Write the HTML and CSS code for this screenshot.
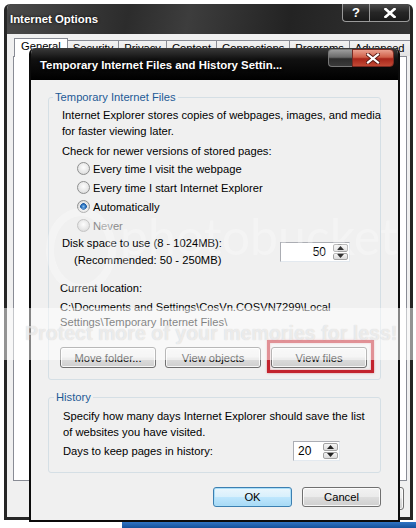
FILE: index.html
```html
<!DOCTYPE html>
<html lang="en">
<head>
    <meta charset="UTF-8">
    <meta name="viewport" content="width=device-width, initial-scale=1.0">
    <title>Temporary Internet Files and History Settings</title>
    <link rel="stylesheet" href="styles.css">
</head>
<body>
    <div class="desktop">
        <div class="taskbar"></div>

        <!-- Internet Options window behind the dialog -->
        <div class="window outer">
            <div class="titlebar">
                <span class="title">Internet Options</span>
                <div class="caption">
                    <span class="cap-btn help">?</span>
                    <span class="cap-btn close">
                        <svg width="12" height="10" viewBox="0 0 12 10"><path d="M1.5 1 L10.5 9 M10.5 1 L1.5 9" stroke="#fff" stroke-width="2.6" stroke-linecap="square"/></svg>
                    </span>
                </div>
            </div>
            <div class="outer-body">
                <ul class="tabs">
                    <li class="active">General</li>
                    <li>Security</li>
                    <li>Privacy</li>
                    <li>Content</li>
                    <li>Connections</li>
                    <li>Programs</li>
                    <li>Advanced</li>
                </ul>
                <div class="tab-panel"></div>
                <div class="outer-buttons">
                    <button class="btn">OK</button>
                    <button class="btn">Cancel</button>
                    <button class="btn">Apply</button>
                </div>
            </div>
        </div>

        <!-- Temporary Internet Files dialog -->
        <div class="window dialog">
            <div class="titlebar dark">
                <span class="title">Temporary Internet Files and History Settin...</span>
                <div class="caption">
                    <span class="cap-btn blank"></span>
                    <span class="cap-btn red">
                        <svg width="14" height="11" viewBox="0 0 14 11"><path d="M2 1.5 L12 9.5 M12 1.5 L2 9.5" stroke="#5a1a14" stroke-width="4" stroke-linecap="square"/><path d="M2 1.5 L12 9.5 M12 1.5 L2 9.5" stroke="#fff" stroke-width="2.2" stroke-linecap="square"/></svg>
                    </span>
                </div>
            </div>
            <div class="dialog-body">
                <fieldset class="group">
                    <legend>Temporary Internet Files</legend>
                    <p class="text">Internet Explorer stores copies of webpages, images, and media<br>for faster viewing later.</p>
                    <p class="text check">Check for newer versions of stored pages:</p>
                    <ul class="options">
                        <li><span class="radio"></span>Every time I visit the webpage</li>
                        <li><span class="radio"></span>Every time I start Internet Explorer</li>
                        <li><span class="radio checked"></span>Automatically</li>
                        <li class="faded"><span class="radio"></span>Never</li>
                    </ul>
                    <div class="disk">
                        <div class="disk-label">
                            <div>Disk space to use (8 - 1024MB):</div>
                            <div class="indent">(Recommended: 50 - 250MB)</div>
                        </div>
                        <div class="spin disk-spin">
                            <span class="spin-value">50</span>
                            <span class="spin-arrows">
                                <span class="arrow"><svg width="7" height="4" viewBox="0 0 7 4"><path d="M0 4 L3.5 0 L7 4 Z" fill="#333"/></svg></span>
                                <span class="arrow"><svg width="7" height="4" viewBox="0 0 7 4"><path d="M0 0 L3.5 4 L7 0 Z" fill="#333"/></svg></span>
                            </span>
                        </div>
                    </div>
                    <div class="location">
                        <p class="text">Current location:</p>
                        <p class="path">C:\Documents and Settings\CosVn.COSVN7299\Local<br>Settings\Temporary Internet Files\</p>
                        <div class="actions">
                            <button class="btn wide">Move folder...</button>
                            <button class="btn wide">View objects</button>
                            <span class="highlight"><button class="btn wide">View files</button></span>
                        </div>
                    </div>
                </fieldset>

                <fieldset class="group history">
                    <legend>History</legend>
                    <p class="text">Specify how many days Internet Explorer should save the list<br>of websites you have visited.</p>
                    <div class="days">
                        <span>Days to keep pages in history:</span>
                        <div class="spin days-spin">
                            <span class="spin-value">20</span>
                            <span class="spin-arrows">
                                <span class="arrow"><svg width="7" height="4" viewBox="0 0 7 4"><path d="M0 4 L3.5 0 L7 4 Z" fill="#222"/></svg></span>
                                <span class="arrow"><svg width="7" height="4" viewBox="0 0 7 4"><path d="M0 0 L3.5 4 L7 0 Z" fill="#222"/></svg></span>
                            </span>
                        </div>
                    </div>
                </fieldset>

                <div class="footer">
                    <button class="btn default">OK</button>
                    <button class="btn">Cancel</button>
                </div>
            </div>
        </div>

        <!-- photo host watermark -->
        <div class="wm-ring"></div>
        <div class="wm-logo">photobucket</div>
        <div class="wm-band">Protect more of your memories for less!</div>
    </div>
</body>
</html>
```

FILE: styles.css
```css
body {
    margin: 0;
    background: #fff;
    font-family: "Liberation Sans", Arial, sans-serif;
    font-size: 11.2px;
    color: #000;
}

.desktop {
    position: relative;
    width: 416px;
    height: 528px;
    overflow: hidden;
}

.taskbar {
    position: absolute;
    left: 122px;
    right: 0;
    top: 522px;
    bottom: 0;
    background: linear-gradient(#2f74c4, #15519a);
}

/* windows */
.window {
    position: absolute;
    box-sizing: border-box;
    background: #f0f0f0;
    border-radius: 6px 6px 0 0;
    overflow: hidden;
}

.outer {
    left: 4px;
    top: 4px;
    width: 409px;
    height: 516px;
    border: 3px solid #262626;
    border-top: none;
}

.dialog {
    left: 29px;
    top: 48px;
    width: 371px;
    height: 474px;
    border: 2px solid #0b0b0b;
    border-top: none;
}

.titlebar {
    display: flex;
    justify-content: space-between;
    height: 30px;
    background: linear-gradient(100deg, #4a4a4a 0%, #2c2c2c 30%, #3d3d3d 45%, #232323 70%, #333 100%);
}

.titlebar .title {
    margin: 8px 0 0 3px;
    line-height: 14px;
    font-weight: bold;
    font-size: 11.4px;
    color: #fff;
    text-shadow: 0 0 3px #000;
}

.titlebar.dark {
    height: 32px;
    background: linear-gradient(#3a3a3a 0%, #111 35%, #000 100%);
}

.titlebar.dark .title {
    margin: 10px 0 0 9px;
}

.caption {
    display: flex;
}

.cap-btn {
    display: flex;
    align-items: center;
    justify-content: center;
    box-sizing: border-box;
    height: 18px;
    border: 1px solid #9a9a9a;
    border-top: none;
    background: linear-gradient(#4c4c4c, #262626 50%, #1a1a1a);
    color: #fff;
    font-weight: bold;
    font-size: 13px;
}

.cap-btn.help {
    width: 27px;
    border-radius: 0 0 0 4px;
    border-right: none;
}

.cap-btn.close {
    width: 41px;
    border-radius: 0 0 4px 0;
}

.dialog .caption {
    margin: 1px 4px 0 0;
}

.cap-btn.blank {
    width: 24px;
    border-color: #777;
    border-top: 1px solid #777;
    border-right: none;
    border-radius: 4px 0 0 4px;
    background: linear-gradient(#9c9c9c, #6a6a6a 45%, #2c2c2c 55%, #3a3a3a);
}

.cap-btn.red {
    width: 42px;
    border-color: #7a2a22;
    border-top: 1px solid #7a2a22;
    border-radius: 0 4px 4px 0;
    background: linear-gradient(#e9a08e, #d0604a 45%, #a8261a 55%, #c24a36);
}

/* Internet Options body */
.outer-body {
    padding-top: 6px;
}

.tabs {
    display: flex;
    list-style: none;
    margin: 0 0 0 7px;
    padding: 0;
    height: 16px;
    align-items: flex-end;
}

.tabs li {
    height: 15px;
    line-height: 15px;
    padding: 0 5px;
    border: 1px solid #898c95;
    border-bottom: none;
    border-left: none;
    background: linear-gradient(#f2f2f2, #e3e3e3);
}

.tabs li.active {
    height: 18px;
    margin-bottom: -1px;
    padding: 0 6px;
    border-left: 1px solid #898c95;
    background: #fff;
    position: relative;
}

.tab-panel {
    width: 394px;
    height: 425px;
    margin-left: 6px;
    box-sizing: border-box;
    border: 1px solid #898c95;
    background: #fff;
}

.outer-buttons {
    display: flex;
    justify-content: flex-end;
    gap: 8px;
    margin: 6px 6px 0 0;
}

.outer-buttons .btn {
    width: 75px;
    height: 23px;
}

/* dialog body */
.dialog-body {
    display: flex;
    flex-direction: column;
}

.group {
    margin: 10px 17px 0;
    padding: 3px 13px 11px;
    border: 1px solid #d5dfe5;
    border-radius: 3px;
    min-width: 0;
}

.group legend {
    margin-left: -9px;
    padding: 0 2px;
    line-height: 14px;
    color: #1d5a96;
}

.text,
.path {
    margin: 0;
    line-height: 16px;
    white-space: nowrap;
}

.check {
    margin-top: 4px;
}

.options {
    list-style: none;
    margin: 0 0 0 15px;
    padding: 0;
}

.options li {
    display: flex;
    align-items: center;
    gap: 3px;
    height: 19px;
}

.options li.faded {
    color: #8a8a8a;
}

.radio {
    width: 13px;
    height: 13px;
    box-sizing: border-box;
    border-radius: 50%;
    border: 1px solid #8e8f8f;
    background: radial-gradient(circle at 50% 40%, #fdfdfd 0, #e6e6e6 60%, #cfcfcf 100%);
}

.faded .radio {
    border-color: #c4c4c4;
}

.radio.checked {
    background: radial-gradient(circle, #8ec3ee 0, #2f76c2 2px, #1b5aa3 3px, #eaeaea 3.6px, #d2d2d2 100%);
}

.disk {
    display: flex;
    line-height: 17px;
}

.disk .indent {
    padding-left: 12px;
}

.spin {
    display: flex;
    box-sizing: border-box;
    height: 20px;
    border: 1px solid #abadb3;
    border-color: #abadb3 #e3e9ef #e3e9ef #abadb3;
    background: #fff;
}

.disk-spin {
    width: 70px;
    margin: 7px 17px 0 auto;
}

.spin-value {
    flex: 1;
    line-height: 18px;
    font-size: 12px;
}

.disk-spin .spin-value {
    text-align: right;
    padding-right: 6px;
}

.days-spin {
    width: 47px;
    margin-right: 27px;
}

.days-spin .spin-value {
    padding-left: 4px;
}

.spin-arrows {
    display: flex;
    flex-direction: column;
    width: 15px;
    padding: 1px;
    gap: 1px;
}

.arrow {
    flex: 1;
    display: flex;
    align-items: center;
    justify-content: center;
    border: 1px solid #a3a3a3;
    border-radius: 2px;
    background: linear-gradient(#f5f5f5, #dcdcdc);
}

.location {
    margin: 11px 0 0 -2px;
}

.path {
    margin-top: 4px;
    line-height: 15px;
}

.actions {
    display: flex;
    gap: 9px;
    margin-top: 17px;
}

.highlight {
    position: relative;
    display: inline-flex;
    margin-left: 1px;
}

.highlight::after {
    content: "";
    position: absolute;
    left: -4px;
    right: -7px;
    top: -7px;
    bottom: -5px;
    border: 3px solid #c2232d;
    box-shadow: 0 0 2px rgba(194, 35, 45, 0.5), inset 0 0 2px rgba(194, 35, 45, 0.5);
}

.btn {
    box-sizing: border-box;
    height: 21px;
    padding: 0;
    border: 1px solid #707070;
    border-radius: 3px;
    background: linear-gradient(#f2f2f2 0%, #ebebeb 48%, #dddddd 52%, #cfcfcf 100%);
    box-shadow: inset 0 0 0 1px rgba(255, 255, 255, 0.8);
    font: inherit;
    color: #000;
}

.btn.wide {
    width: 96px;
}

.btn.default {
    border-color: #3c7fb1;
    background: linear-gradient(#eaf6fd 0%, #d9f0fc 48%, #bee6fd 52%, #a7d9f5 100%);
    box-shadow: inset 0 0 0 1px #a9def8;
}

.history {
    padding-left: 14px;
    padding-top: 4px;
}

.days {
    display: flex;
    align-items: center;
    justify-content: space-between;
    margin-top: 1px;
}

.footer {
    display: flex;
    justify-content: flex-end;
    gap: 10px;
    margin: 14px 17px 0;
}

.footer .btn {
    width: 79px;
    height: 20px;
}

/* watermark left by the photo host */
.wm-band {
    position: absolute;
    left: 0;
    right: 0;
    top: 308px;
    height: 52px;
    box-sizing: border-box;
    padding: 13px 0 0 25px;
    background: rgba(255, 255, 255, 0.5);
    font-weight: bold;
    font-size: 19.6px;
    line-height: 24px;
    color: rgba(255, 255, 255, 0.6);
    text-shadow: 0 0 1px rgba(0, 0, 0, 0.18);
    white-space: nowrap;
}

.wm-logo {
    position: absolute;
    left: 120px;
    top: 206px;
    font-family: Lato, "Liberation Sans", sans-serif;
    font-size: 50px;
    line-height: 60px;
    color: rgba(255, 255, 255, 0.28);
    white-space: nowrap;
}

.wm-ring {
    position: absolute;
    left: 46px;
    top: 208px;
    width: 70px;
    height: 84px;
    box-sizing: border-box;
    border: 8px solid rgba(255, 255, 255, 0.3);
    border-radius: 50%;
}
```
